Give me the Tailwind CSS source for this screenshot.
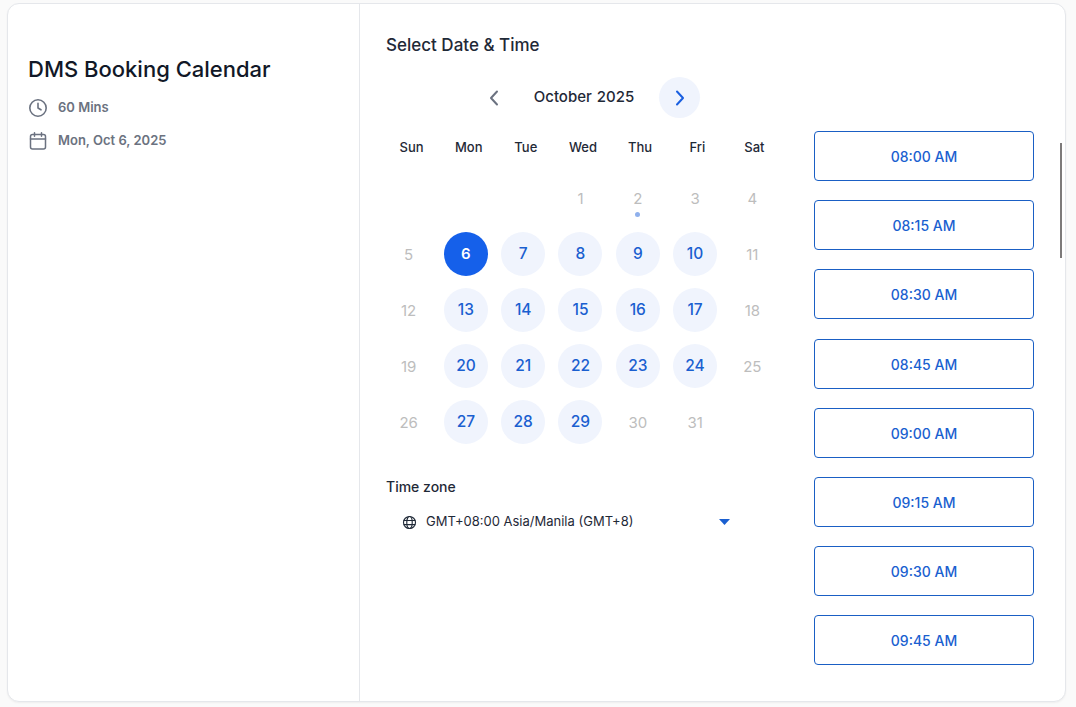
<!DOCTYPE html>
<html lang="en">
<head>
  <meta charset="UTF-8" />
  <title>DMS Booking Calendar</title>
  <script src="https://cdn.jsdelivr.net/npm/@tailwindcss/browser@4"></script>
</head>
<body class="h-[707px] overflow-hidden bg-[#fafafa] font-['Inter',sans-serif] text-[#111827]">
  <div class="mt-[3px] ml-[7px] flex h-[699px] w-[1059px] rounded-xl border border-[#e5e7eb] bg-white shadow-[0_1px_2px_rgba(0,0,0,0.05)]">

    <!-- left info -->
    <aside class="w-[352px] shrink-0 border-r border-[#e5e7eb] pl-5 pt-[50px]">
      <h1 class="text-[22px] leading-[30px] font-medium text-[#111827]">DMS Booking Calendar</h1>
      <div class="mt-[12px] flex h-6 items-center gap-[10px] text-[13px] font-semibold text-[#6b7280]">
        <svg class="h-5 w-5" viewBox="0 0 20 20" fill="none" stroke="#6b7280" stroke-width="1.6" stroke-linecap="round" stroke-linejoin="round"><circle cx="10" cy="10" r="8.2"/><path d="M10 5.2V10l3 1.8"/></svg>
        <span>60 Mins</span>
      </div>
      <div class="mt-[9px] flex h-6 items-center gap-[10px] text-[13px] font-semibold text-[#6b7280]">
        <svg class="h-5 w-5" viewBox="0 0 20 20" fill="none" stroke="#6b7280" stroke-width="1.5" stroke-linecap="round" stroke-linejoin="round"><rect x="2.5" y="3.5" width="15" height="14.5" rx="2"/><path d="M2.5 8h15M6.5 1.8v3.4M13.5 1.8v3.4"/></svg>
        <span>Mon, Oct 6, 2025</span>
      </div>
    </aside>

    <!-- right: date & time -->
    <main class="relative flex-1 pl-[26px] pt-[29px]">
      <h2 class="text-[17px] leading-6 font-medium text-[#1f2937]">Select Date &amp; Time</h2>

      <div class="flex">
        <section class="w-[400px] shrink-0">
          <div class="mt-[20px] flex h-[41px] items-center pl-[96px]">
            <button class="flex h-6 w-6 items-center justify-center">
              <svg class="h-5 w-5" viewBox="0 0 20 20" fill="none" stroke="#6b7280" stroke-width="2" stroke-linecap="round" stroke-linejoin="round"><path d="M13 3.5 7 10l6 6.5"/></svg>
            </button>
            <div class="ml-[23px] w-[110px] text-center text-[15px] font-medium whitespace-pre text-[#1f2937] [word-spacing:1px]">October 2025</div>
            <button class="ml-[20px] flex h-[41px] w-[41px] items-center justify-center rounded-full bg-[#f0f4fd]">
              <svg class="h-5 w-5" viewBox="0 0 20 20" fill="none" stroke="#1a5fe0" stroke-width="2" stroke-linecap="round" stroke-linejoin="round"><path d="M7 3.5 13 10l-6 6.5"/></svg>
            </button>
          </div>

          <div class="mt-[19px] grid h-[20px] w-[400px] grid-cols-7 text-center text-[13px] leading-5 font-medium text-[#1f2937]">
            <span class="ml-[-6px]">Sun</span><span class="ml-[-6px]">Mon</span><span class="ml-[-6px]">Tue</span><span class="ml-[-6px]">Wed</span><span class="ml-[-6px]">Thu</span><span class="ml-[-6px]">Fri</span><span class="ml-[-6px]">Sat</span>
          </div>

          <div class="mt-[19px] ml-[-6px] grid w-[401px] grid-cols-7 auto-rows-[56px] justify-items-center text-[15px]">
            <span></span><span></span><span></span>
            <span class="flex h-11 w-11 items-center justify-center pt-[2px] text-[#bdbdbd]">1</span>
            <span class="relative flex h-11 w-11 items-center justify-center pt-[2px] text-[#bdbdbd]">2<i class="absolute top-[36px] left-[19px] h-[5px] w-[5px] rounded-full bg-[#8fb0ec]"></i></span>
            <span class="flex h-11 w-11 items-center justify-center pt-[2px] text-[#bdbdbd]">3</span>
            <span class="flex h-11 w-11 items-center justify-center pt-[2px] text-[#bdbdbd]">4</span>

            <span class="flex h-11 w-11 items-center justify-center pt-[2px] text-[#bdbdbd]">5</span>
            <span class="flex h-11 w-11 items-center justify-center rounded-full bg-[#1560ea] font-semibold text-white">6</span>
            <span class="flex h-11 w-11 items-center justify-center rounded-full bg-[#f0f4fd] text-[15.5px] font-medium text-[#1a5fd0]">7</span>
            <span class="flex h-11 w-11 items-center justify-center rounded-full bg-[#f0f4fd] text-[15.5px] font-medium text-[#1a5fd0]">8</span>
            <span class="flex h-11 w-11 items-center justify-center rounded-full bg-[#f0f4fd] text-[15.5px] font-medium text-[#1a5fd0]">9</span>
            <span class="flex h-11 w-11 items-center justify-center rounded-full bg-[#f0f4fd] text-[15.5px] font-medium text-[#1a5fd0]">10</span>
            <span class="flex h-11 w-11 items-center justify-center pt-[2px] text-[#bdbdbd]">11</span>

            <span class="flex h-11 w-11 items-center justify-center pt-[2px] text-[#bdbdbd]">12</span>
            <span class="flex h-11 w-11 items-center justify-center rounded-full bg-[#f0f4fd] text-[15.5px] font-medium text-[#1a5fd0]">13</span>
            <span class="flex h-11 w-11 items-center justify-center rounded-full bg-[#f0f4fd] text-[15.5px] font-medium text-[#1a5fd0]">14</span>
            <span class="flex h-11 w-11 items-center justify-center rounded-full bg-[#f0f4fd] text-[15.5px] font-medium text-[#1a5fd0]">15</span>
            <span class="flex h-11 w-11 items-center justify-center rounded-full bg-[#f0f4fd] text-[15.5px] font-medium text-[#1a5fd0]">16</span>
            <span class="flex h-11 w-11 items-center justify-center rounded-full bg-[#f0f4fd] text-[15.5px] font-medium text-[#1a5fd0]">17</span>
            <span class="flex h-11 w-11 items-center justify-center pt-[2px] text-[#bdbdbd]">18</span>

            <span class="flex h-11 w-11 items-center justify-center pt-[2px] text-[#bdbdbd]">19</span>
            <span class="flex h-11 w-11 items-center justify-center rounded-full bg-[#f0f4fd] text-[15.5px] font-medium text-[#1a5fd0]">20</span>
            <span class="flex h-11 w-11 items-center justify-center rounded-full bg-[#f0f4fd] text-[15.5px] font-medium text-[#1a5fd0]">21</span>
            <span class="flex h-11 w-11 items-center justify-center rounded-full bg-[#f0f4fd] text-[15.5px] font-medium text-[#1a5fd0]">22</span>
            <span class="flex h-11 w-11 items-center justify-center rounded-full bg-[#f0f4fd] text-[15.5px] font-medium text-[#1a5fd0]">23</span>
            <span class="flex h-11 w-11 items-center justify-center rounded-full bg-[#f0f4fd] text-[15.5px] font-medium text-[#1a5fd0]">24</span>
            <span class="flex h-11 w-11 items-center justify-center pt-[2px] text-[#bdbdbd]">25</span>

            <span class="flex h-11 w-11 items-center justify-center pt-[2px] text-[#bdbdbd]">26</span>
            <span class="flex h-11 w-11 items-center justify-center rounded-full bg-[#f0f4fd] text-[15.5px] font-medium text-[#1a5fd0]">27</span>
            <span class="flex h-11 w-11 items-center justify-center rounded-full bg-[#f0f4fd] text-[15.5px] font-medium text-[#1a5fd0]">28</span>
            <span class="flex h-11 w-11 items-center justify-center rounded-full bg-[#f0f4fd] text-[15.5px] font-medium text-[#1a5fd0]">29</span>
            <span class="flex h-11 w-11 items-center justify-center pt-[2px] text-[#bdbdbd]">30</span>
            <span class="flex h-11 w-11 items-center justify-center pt-[2px] text-[#bdbdbd]">31</span>
          </div>

          <div class="mt-[21px] text-[14px] leading-5 font-medium text-[#1f2937]">Time zone</div>
          <div class="mt-[15px] flex h-5 w-[344px] items-center pl-4 text-[13px] text-[#1f2937]">
            <svg class="h-[15px] w-[15px]" viewBox="0 0 16 16" fill="none" stroke="#1f2937" stroke-width="1.2"><circle cx="8" cy="8" r="6.4"/><ellipse cx="8" cy="8" rx="2.9" ry="6.4"/><path d="M1.8 5.8h12.4M1.8 10.2h12.4"/></svg>
            <span class="ml-[9px]">GMT+08:00 Asia/Manila (GMT+8)</span>
            <svg class="ml-auto h-[6px] w-[11px]" viewBox="0 0 11 6"><path d="M0 0h11L5.5 6z" fill="#1a5fd0"/></svg>
          </div>
        </section>

        <!-- time slots -->
        <div class="mt-[74px] ml-[28px] flex h-[540px] w-[220px] flex-col gap-[19.2px] overflow-hidden">
          <button class="h-[50px] shrink-0 rounded border border-[#1a5fc4] pt-[2px] text-sm font-medium text-[#1a5fd0]">08:00 AM</button>
          <button class="h-[50px] shrink-0 rounded border border-[#1a5fc4] pt-[2px] text-sm font-medium text-[#1a5fd0]">08:15 AM</button>
          <button class="h-[50px] shrink-0 rounded border border-[#1a5fc4] pt-[2px] text-sm font-medium text-[#1a5fd0]">08:30 AM</button>
          <button class="h-[50px] shrink-0 rounded border border-[#1a5fc4] pt-[2px] text-sm font-medium text-[#1a5fd0]">08:45 AM</button>
          <button class="h-[50px] shrink-0 rounded border border-[#1a5fc4] pt-[2px] text-sm font-medium text-[#1a5fd0]">09:00 AM</button>
          <button class="h-[50px] shrink-0 rounded border border-[#1a5fc4] pt-[2px] text-sm font-medium text-[#1a5fd0]">09:15 AM</button>
          <button class="h-[50px] shrink-0 rounded border border-[#1a5fc4] pt-[2px] text-sm font-medium text-[#1a5fd0]">09:30 AM</button>
          <button class="h-[50px] shrink-0 rounded border border-[#1a5fc4] pt-[2px] text-sm font-medium text-[#1a5fd0]">09:45 AM</button>
        </div>
      </div>

      <!-- scrollbar thumb -->
      <div class="absolute top-[139px] right-[3px] h-[115px] w-[2px] bg-[#7d7a7a]"></div>
    </main>
  </div>
</body>
</html>
